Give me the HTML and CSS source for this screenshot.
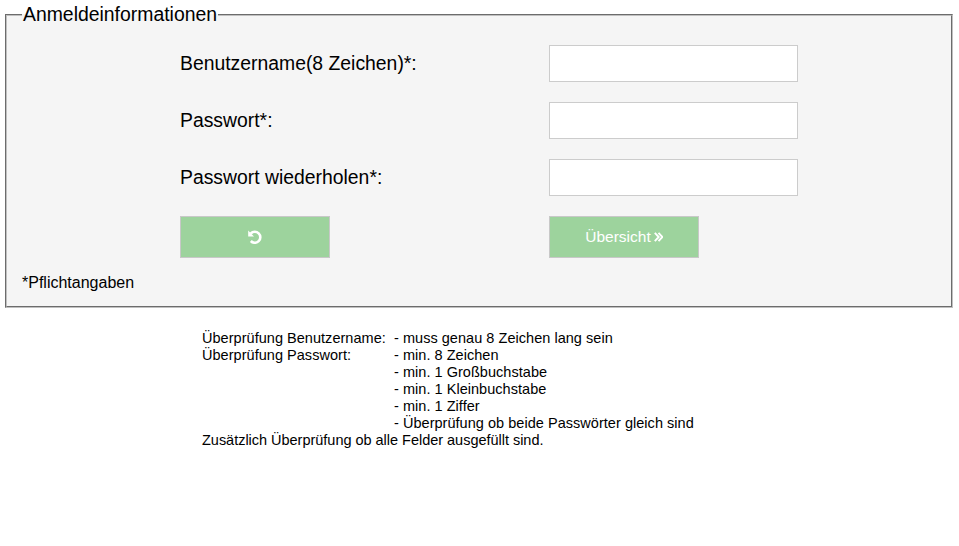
FILE: index.html
```html
<!DOCTYPE html>
<html lang="de">
<head>
<meta charset="utf-8">
<title>Anmeldeinformationen</title>
<link rel="stylesheet" href="styles.css">
</head>
<body>
<form>
<fieldset>
<legend>Anmeldeinformationen</legend>
<div class="fields">
<label for="user">Benutzername(8 Zeichen)*:</label><input id="user" type="text">
<label for="pass">Passwort*:</label><input id="pass" type="password">
<label for="repeat">Passwort wiederholen*:</label><input id="repeat" type="password">
<button type="reset" aria-label="Reset"><svg class="undo" viewBox="0 0 14 14"><path class="arc" d="M2.800 3.500A5.500 5.500 0 1 1 2.800 11"/><path class="head" d="M.2.600v5.800h5.800z"/></svg></button>
<button type="button">Übersicht <svg class="next" viewBox="0 0 9 10"><path d="M.8.8 4.700 5 .8 9.200M4.500.8 8.400 5 4.500 9.200"/></svg></button>
</div>
<p class="required">*Pflichtangaben</p>
</fieldset>
</form>
<div class="rules">
<span>Überprüfung Benutzername:</span><span>- muss genau 8 Zeichen lang sein</span>
<span>Überprüfung Passwort:</span><span>- min. 8 Zeichen<br>- min. 1 Großbuchstabe<br>- min. 1 Kleinbuchstabe<br>- min. 1 Ziffer<br>- Überprüfung ob beide Passwörter gleich sind</span>
<span class="wide">Zusätzlich Überprüfung ob alle Felder ausgefüllt sind.</span>
</div>
</body>
</html>
```
FILE: styles.css
```css
* { box-sizing: border-box; }
body { margin: 0; background: #fff; color: #000; font-family: "Liberation Sans", Arial, sans-serif; }
form { padding: 4px 6px 0 5px; }
fieldset { margin: 0; min-width: 0; height: 304px; padding: 0 15px; border: 2px groove #c0c0c0; background: #f5f5f5; }
legend { height: 22px; padding: 0 1px; font-size: 19.400px; line-height: 20px; }
.fields { display: grid; grid-template-columns: 369px 249px; grid-template-rows: 37px 37px 37px 42px; row-gap: 20px; margin: 19px 0 0 158px; }
label { font-size: 19.360px; line-height: 37px; }
input { width: 249px; height: 37px; margin: 0; padding: 8px; border: 1px solid #ccc; background: #fff; font-size: 16px; }
button { display: flex; align-items: center; justify-content: center; width: 150px; height: 42px; margin: 0; padding: 0 0 1px; border: 1px solid #c8c8c8; background: #9dd39d; color: #fff; font: 15.500px "Liberation Sans", Arial, sans-serif; }
.undo { width: 14px; height: 14px; }
.arc { fill: none; stroke: #fff; stroke-width: 2.600; }
.head { fill: #fff; }
.next { width: 9px; height: 10px; margin: 1px 0 0 3px; fill: none; stroke: #fff; stroke-width: 1.900; }
.required { margin: 16px 0 0; font-size: 16px; line-height: 18px; }
.rules { display: grid; grid-template-columns: 192px auto; margin: 22px 0 0 202px; font-size: 14.500px; line-height: 17px; letter-spacing: .035px; }
.wide { grid-column: 1 / 3; letter-spacing: -.02px; }
```
